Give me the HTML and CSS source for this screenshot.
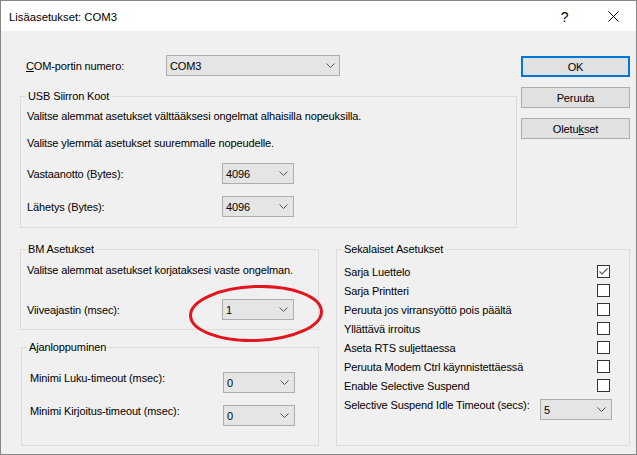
FILE: index.html
```html
<!DOCTYPE html>
<html lang="fi">
<head>
<meta charset="utf-8">
<title>Lisäasetukset: COM3</title>
<link rel="stylesheet" href="styles.css">
</head>
<body>
<div class="window">
  <div class="titlebar">
    <span class="title">Lisäasetukset: COM3</span>
    <span class="tb-btn help">?</span>
    <span class="tb-btn close"><svg width="11" height="11" viewBox="0 0 11 11"><path d="M0.5 0.5L10.5 10.5M10.5 0.5L0.5 10.5" stroke="#000" stroke-width="1" fill="none"/></svg></span>
  </div>
  <div class="client">
    <div class="top">
      <div class="top-left">
        <div class="com-row">
          <span class="com-label"><u>C</u>OM-portin numero:</span>
          <div class="combo combo-com"><span class="val">COM3</span><svg class="chev" width="9" height="5" viewBox="0 0 9 5"><path d="M0.5 0.5L4.5 4.5L8.5 0.5" fill="none" stroke="#555" stroke-width="1"/></svg></div>
        </div>
        <fieldset class="group usb">
          <legend>USB Siirron Koot</legend>
          <div class="gbody">
            <div class="line">Valitse alemmat asetukset välttääksesi ongelmat alhaisilla nopeuksilla.</div>
            <div class="line l2">Valitse ylemmät asetukset suuremmalle nopeudelle.</div>
            <div class="field f1"><span class="label">Vastaanotto (Bytes):</span><div class="combo"><span class="val">4096</span><svg class="chev" width="9" height="5" viewBox="0 0 9 5"><path d="M0.5 0.5L4.5 4.5L8.5 0.5" fill="none" stroke="#555" stroke-width="1"/></svg></div></div>
            <div class="field f2"><span class="label">Lähetys (Bytes):</span><div class="combo"><span class="val">4096</span><svg class="chev" width="9" height="5" viewBox="0 0 9 5"><path d="M0.5 0.5L4.5 4.5L8.5 0.5" fill="none" stroke="#555" stroke-width="1"/></svg></div></div>
          </div>
        </fieldset>
      </div>
      <div class="buttons">
        <div class="btn default">OK</div>
        <div class="btn">Peruuta</div>
        <div class="btn">Oletu<u>k</u>set</div>
      </div>
    </div>
    <div class="bottom">
      <div class="bottom-left">
        <fieldset class="group bm">
          <legend>BM Asetukset</legend>
          <div class="gbody">
            <div class="line">Valitse alemmat asetukset korjataksesi vaste ongelman.</div>
            <div class="field"><span class="label">Viiveajastin (msec):</span><div class="combo marked"><span class="val">1</span><svg class="chev" width="9" height="5" viewBox="0 0 9 5"><path d="M0.5 0.5L4.5 4.5L8.5 0.5" fill="none" stroke="#555" stroke-width="1"/></svg><svg class="ellipse" width="134" height="57" viewBox="0 0 134 57"><ellipse cx="67" cy="28.5" rx="65.5" ry="27" fill="none" stroke="#e3141d" stroke-width="3" transform="rotate(-2 67 28.5)"/></svg></div></div>
          </div>
        </fieldset>
        <fieldset class="group ajan">
          <legend>Ajanloppuminen</legend>
          <div class="gbody">
            <div class="field"><span class="label">Minimi Luku-timeout (msec):</span><div class="combo"><span class="val">0</span><svg class="chev" width="9" height="5" viewBox="0 0 9 5"><path d="M0.5 0.5L4.5 4.5L8.5 0.5" fill="none" stroke="#555" stroke-width="1"/></svg></div></div>
            <div class="field f2"><span class="label">Minimi Kirjoitus-timeout (msec):</span><div class="combo"><span class="val">0</span><svg class="chev" width="9" height="5" viewBox="0 0 9 5"><path d="M0.5 0.5L4.5 4.5L8.5 0.5" fill="none" stroke="#555" stroke-width="1"/></svg></div></div>
          </div>
        </fieldset>
      </div>
      <fieldset class="group misc">
        <legend>Sekalaiset Asetukset</legend>
        <div class="gbody">
          <div class="check-row"><span>Sarja Luettelo</span><span class="checkbox"><svg width="11" height="11" viewBox="0 0 11 11"><path d="M1.5 5.5L4 8L9.5 2.5" fill="none" stroke="#555" stroke-width="1.1"/></svg></span></div>
          <div class="check-row"><span>Sarja Printteri</span><span class="checkbox"></span></div>
          <div class="check-row"><span>Peruuta jos virransyöttö pois päältä</span><span class="checkbox"></span></div>
          <div class="check-row"><span>Yllättävä irroitus</span><span class="checkbox"></span></div>
          <div class="check-row"><span>Aseta RTS suljettaessa</span><span class="checkbox"></span></div>
          <div class="check-row"><span>Peruuta Modem Ctrl käynnistettäessä</span><span class="checkbox"></span></div>
          <div class="check-row"><span>Enable Selective Suspend</span><span class="checkbox"></span></div>
          <div class="select-row"><span class="label">Selective Suspend Idle Timeout (secs):</span><div class="combo"><span class="val">5</span><svg class="chev" width="9" height="5" viewBox="0 0 9 5"><path d="M0.5 0.5L4.5 4.5L8.5 0.5" fill="none" stroke="#555" stroke-width="1"/></svg></div></div>
        </div>
      </fieldset>
    </div>
  </div>
</div>
</body>
</html>
```
FILE: styles.css
```css
* { box-sizing: border-box; }
html, body { margin: 0; padding: 0; }
body {
  width: 637px;
  height: 455px;
  overflow: hidden;
  background: #ffffff;
  font-family: "Liberation Sans", Arial, sans-serif;
  font-size: 11px;
  letter-spacing: -0.12px;
  line-height: 16px;
  color: #000;
}
.window {
  width: 637px;
  height: 455px;
  border: 1px solid #868686;
  display: flex;
  flex-direction: column;
}
.titlebar {
  height: 30px;
  flex-shrink: 0;
  background: #fff;
  display: flex;
  align-items: center;
  padding-left: 8px;
}
.title { flex: 1; font-size: 11.3px; letter-spacing: 0; padding-top: 1px; }
.tb-btn {
  width: 46px;
  height: 30px;
  display: flex;
  align-items: center;
  justify-content: center;
}
.help { font-size: 14px; padding-right: 5px; padding-top: 1px; }
.close svg { display: block; }
.client {
  flex: 1;
  background: #f0f0f0;
  padding: 24px 6px 0 19px;
}
.top { display: flex; gap: 4px; align-items: flex-start; }
.top-left { width: 497px; }
.com-row { display: flex; align-items: center; height: 21px; }
.com-label { width: 140px; margin-left: 6px; }
.combo {
  height: 21px;
  width: 72px;
  border: 1px solid #adadad;
  background: #e5e5e5;
  display: flex;
  align-items: center;
  justify-content: space-between;
  padding: 0 5px 0 3px;
}
.combo .chev { display: block; }
.combo-com { width: 174px; padding-right: 4px; }
.group {
  margin: 0;
  padding: 0;
  min-width: 0;
  border: 1px solid #dcdcdc;
}
.group legend {
  margin-left: 5px;
  padding: 0 2px;
  height: 15px;
  line-height: 15px;
}
.usb { margin-top: 13px; }
.usb .gbody { padding: 4px 0 10px 6px; }
.line { height: 16px; white-space: nowrap; }
.line.l2 { margin-top: 11px; }
.field { display: flex; align-items: center; height: 21px; }
.usb .field.f1 { margin-top: 12px; }
.usb .field.f2 { margin-top: 12px; }
.label { width: 195px; flex-shrink: 0; white-space: nowrap; }
.buttons { width: 109px; padding-top: 1px; display: flex; flex-direction: column; gap: 10px; }
.btn {
  height: 21px;
  border: 1px solid #adadad;
  background: #e1e1e1;
  display: flex;
  align-items: center;
  justify-content: center;
}
.btn.default { border: 2px solid #0078d7; }
.bottom { display: flex; gap: 17px; margin-top: 14px; align-items: stretch; }
.bottom-left { width: 299px; }
.bm .gbody { padding: 5px 0 9px 6px; }
.bm .field { margin-top: 21px; }
.marked { position: relative; }
.ellipse { position: absolute; left: -34px; top: -15px; pointer-events: none; }
.ajan { margin-top: 10px; margin-left: 1px; }
.ajan .gbody { padding: 17px 0 19px 8px; }
.ajan .field { align-items: flex-start; }
.ajan .field.f2 { margin-top: 12px; }
.ajan .label { width: 193px; margin-top: -2px; }
.misc { flex: 1; }
.misc .gbody { padding: 5px 17px 0 7px; }
.check-row {
  height: 19px;
  display: flex;
  align-items: center;
  justify-content: space-between;
  white-space: nowrap;
}
.checkbox {
  width: 13px;
  height: 13px;
  border: 1px solid #333;
  background: #fff;
  margin-right: 2px;
  display: flex;
  align-items: center;
  justify-content: center;
}
.checkbox svg { display: block; }
.select-row {
  margin-top: 4px;
  display: flex;
  align-items: flex-start;
  justify-content: space-between;
}
.select-row .label { width: auto; margin-top: -2px; }
```
